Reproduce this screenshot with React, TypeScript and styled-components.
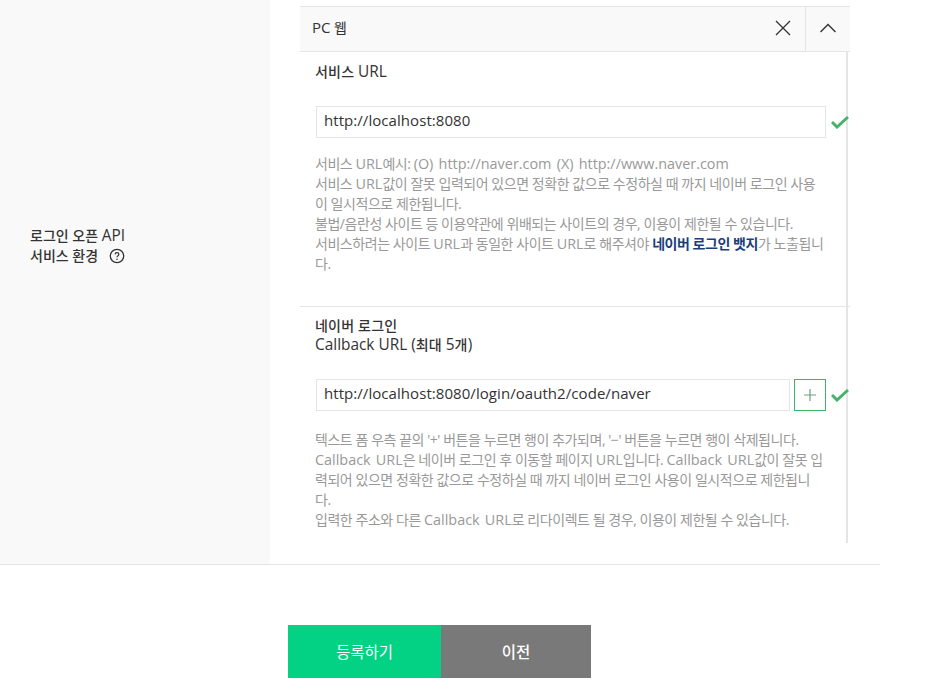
import React from "react";
import styled, { createGlobalStyle } from "styled-components";

const GlobalStyle = createGlobalStyle`
  html, body {
    margin: 0;
    padding: 0;
    background: #fff;
    overflow: hidden;
  }
  body {
    font-family: "Open Sans", "Noto Sans CJK KR", sans-serif;
    color: #333;
  }
`;

const Page = styled.div`
  width: 948px;
  height: 694px;
`;

const FormRow = styled.div`
  display: flex;
  width: 880px;
  height: 565px;
  border-bottom: 1px solid #e5e5e5;
  box-sizing: border-box;
`;

// latin runs sit a bit bigger than the hangul around them
const En = styled.span`
  font-size: 15px;
  line-height: 1;
  letter-spacing: 0;
  font-weight: 400;
`;

const TitleEn = styled(En)`
  font-size: 15.4px;
`;

const HelpEn = styled(En)`
  font-size: 14.4px;
  word-spacing: 1.5px;
`;

const RowLabel = styled.div`
  width: 270px;
  background: #f9f9f9;
  box-sizing: border-box;
  padding: 226px 0 0 30px;
  font-size: 14px;
  line-height: 20px;
  font-weight: 500;
  color: #333;
`;

const HelpIcon = styled.svg`
  width: 16px;
  height: 16px;
  margin-left: 11px;
  vertical-align: -3px;
`;

const RowContent = styled.div`
  padding: 6px 0 0 30px;
`;

const Panel = styled.div`
  width: 550px;
`;

const PanelHeader = styled.div`
  display: flex;
  align-items: stretch;
  height: 46px;
  box-sizing: border-box;
  background: #f9f9f9;
  border-top: 1px solid #e5e5e5;
  border-bottom: 1px solid #e5e5e5;
`;

const PanelTitle = styled.div`
  flex: 1;
  padding-left: 12px;
  font-size: 14px;
  line-height: 42px;
  color: #333;
`;

const HeaderButton = styled.div<{ $divided?: boolean }>`
  display: flex;
  align-items: center;
  justify-content: center;
  width: 45px;
  padding-bottom: 2px;
  border-left: ${(p) => (p.$divided ? "1px solid #e5e5e5" : "none")};
  box-sizing: border-box;
`;

const PanelBody = styled.div`
  width: 548px;
  height: 491px;
  box-sizing: border-box;
  border-right: 2px solid #e5e5e5;
`;

const Section = styled.div<{ $divided?: boolean; $height: number }>`
  width: 550px;
  height: ${(p) => p.$height}px;
  box-sizing: border-box;
  padding: 10px 0 0 15px;
  border-bottom: ${(p) => (p.$divided ? "1px solid #e5e5e5" : "none")};
`;

const SectionTitle = styled.div<{ $gap: number; $lineHeight: number }>`
  font-size: 14px;
  line-height: ${(p) => p.$lineHeight}px;
  font-weight: 500;
  letter-spacing: 0.2px;
  color: #333;
  margin-bottom: ${(p) => p.$gap}px;
`;

const InputRow = styled.div`
  display: flex;
  align-items: center;
  gap: 4px;
  padding-left: 1px;
`;

const UrlInput = styled.div<{ $width: number }>`
  width: ${(p) => p.$width}px;
  height: 32px;
  box-sizing: border-box;
  border: 1px solid #e5e5e5;
  padding: 0 7px;
  font-size: 15px;
  line-height: 27px;
  letter-spacing: 0.06px;
  color: #333;
  background: #fff;
`;

const AddButton = styled.div`
  display: flex;
  align-items: center;
  justify-content: center;
  width: 32px;
  height: 32px;
  box-sizing: border-box;
  border: 1px solid #3cb56b;
  background: #fff;
`;

const CheckIcon = styled.svg`
  width: 18px;
  height: 14px;
  margin-left: 1px;
  flex-shrink: 0;
`;

const HelpText = styled.p<{ $gap: number }>`
  width: 510px;
  margin: ${(p) => p.$gap}px 0 0;
  font-size: 14px;
  line-height: 20px;
  letter-spacing: -0.45px;
  color: #999;
`;

const Badge = styled.a`
  color: #1c3f7c;
  font-weight: 700;
`;

const Actions = styled.div`
  display: flex;
  padding: 60px 0 0 288px;
`;

const ActionButton = styled.div<{ $primary?: boolean }>`
  display: flex;
  align-items: center;
  justify-content: center;
  width: ${(p) => (p.$primary ? "153px" : "150px")};
  height: 53px;
  background: ${(p) => (p.$primary ? "#03d284" : "#797979")};
  color: #fff;
  font-size: 15.5px;
  font-weight: ${(p) => (p.$primary ? 400 : 500)};
`;

const Check = () => (
  <CheckIcon viewBox="0 0 18 14">
    <path d="M1 7 L6 12 L17 2" fill="none" stroke="#45b36b" strokeWidth="3" />
  </CheckIcon>
);

export default function App() {
  return (
    <Page>
      <GlobalStyle />
      <FormRow>
        <RowLabel>
          로그인 오픈 <TitleEn>API</TitleEn>
          <br />
          서비스 환경
          <HelpIcon viewBox="0 0 16 16">
            <circle cx="8" cy="8" r="6.7" fill="none" stroke="#333" strokeWidth="1.3" />
            <path d="M6.1 6.4c0-1.1.9-1.8 1.9-1.8s1.9.7 1.9 1.7c0 1.4-1.9 1.4-1.9 2.9" fill="none" stroke="#333" strokeWidth="1.2" />
            <circle cx="8" cy="11.2" r=".8" fill="#333" />
          </HelpIcon>
        </RowLabel>
        <RowContent>
          <Panel>
            <PanelHeader>
              <PanelTitle>
                <En>PC</En> 웹
              </PanelTitle>
              <HeaderButton>
                <svg width="16" height="16" viewBox="0 0 16 16">
                  <path d="M1 1 L15 15 M15 1 L1 15" stroke="#333" strokeWidth="1.3" fill="none" />
                </svg>
              </HeaderButton>
              <HeaderButton $divided>
                <svg width="18" height="10" viewBox="0 0 18 10">
                  <path d="M1.5 9 L9 1.5 L16.5 9" stroke="#333" strokeWidth="1.4" fill="none" />
                </svg>
              </HeaderButton>
            </PanelHeader>
            <PanelBody>
              <Section $divided $height={255}>
                <SectionTitle $gap={24} $lineHeight={20}>
                  서비스 <TitleEn>URL</TitleEn>
                </SectionTitle>
                <InputRow>
                  <UrlInput $width={510}>http://localhost:8080</UrlInput>
                  <Check />
                </InputRow>
                <HelpText $gap={16}>
                  서비스 <HelpEn>URL</HelpEn>예시: <HelpEn>(O) http://naver.com (X) http://www.naver.com</HelpEn>
                  <br />
                  서비스 <HelpEn>URL</HelpEn>값이 잘못 입력되어 있으면 정확한 값으로 수정하실 때 까지 네이버 로그인 사용이 일시적으로 제한됩니다.
                  <br />
                  불법/음란성 사이트 등 이용약관에 위배되는 사이트의 경우, 이용이 제한될 수 있습니다.
                  <br />
                  서비스하려는 사이트 <HelpEn>URL</HelpEn>과 동일한 사이트 <HelpEn>URL</HelpEn>로 해주셔야 <Badge>네이버 로그인 뱃지</Badge>가 노출됩니다.
                </HelpText>
              </Section>
              <Section $height={236}>
                <SectionTitle $gap={25} $lineHeight={18.5}>
                  네이버 로그인
                  <br />
                  <TitleEn>Callback URL (</TitleEn>최대 <TitleEn>5</TitleEn>개<TitleEn>)</TitleEn>
                </SectionTitle>
                <InputRow>
                  <UrlInput $width={474}>http://localhost:8080/login/oauth2/code/naver</UrlInput>
                  <AddButton>
                    <svg width="12" height="12" viewBox="0 0 12 12">
                      <path d="M6 0 V12 M0 6 H12" stroke="#6f9f80" strokeWidth="1.2" fill="none" />
                    </svg>
                  </AddButton>
                  <Check />
                </InputRow>
                <HelpText $gap={19}>
                  텍스트 폼 우측 끝의 '+' 버튼을 누르면 행이 추가되며, '−' 버튼을 누르면 행이 삭제됩니다.
                  <br />
                  <HelpEn>Callback URL</HelpEn>은 네이버 로그인 후 이동할 페이지 <HelpEn>URL</HelpEn>입니다. <HelpEn>Callback URL</HelpEn>값이 잘못 입력되어 있으면 정확한 값으로 수정하실 때 까지 네이버 로그인 사용이 일시적으로 제한됩니다.
                  <br />
                  입력한 주소와 다른 <HelpEn>Callback URL</HelpEn>로 리다이렉트 될 경우, 이용이 제한될 수 있습니다.
                </HelpText>
              </Section>
            </PanelBody>
          </Panel>
        </RowContent>
      </FormRow>
      <Actions>
        <ActionButton $primary>등록하기</ActionButton>
        <ActionButton>이전</ActionButton>
      </Actions>
    </Page>
  );
}
